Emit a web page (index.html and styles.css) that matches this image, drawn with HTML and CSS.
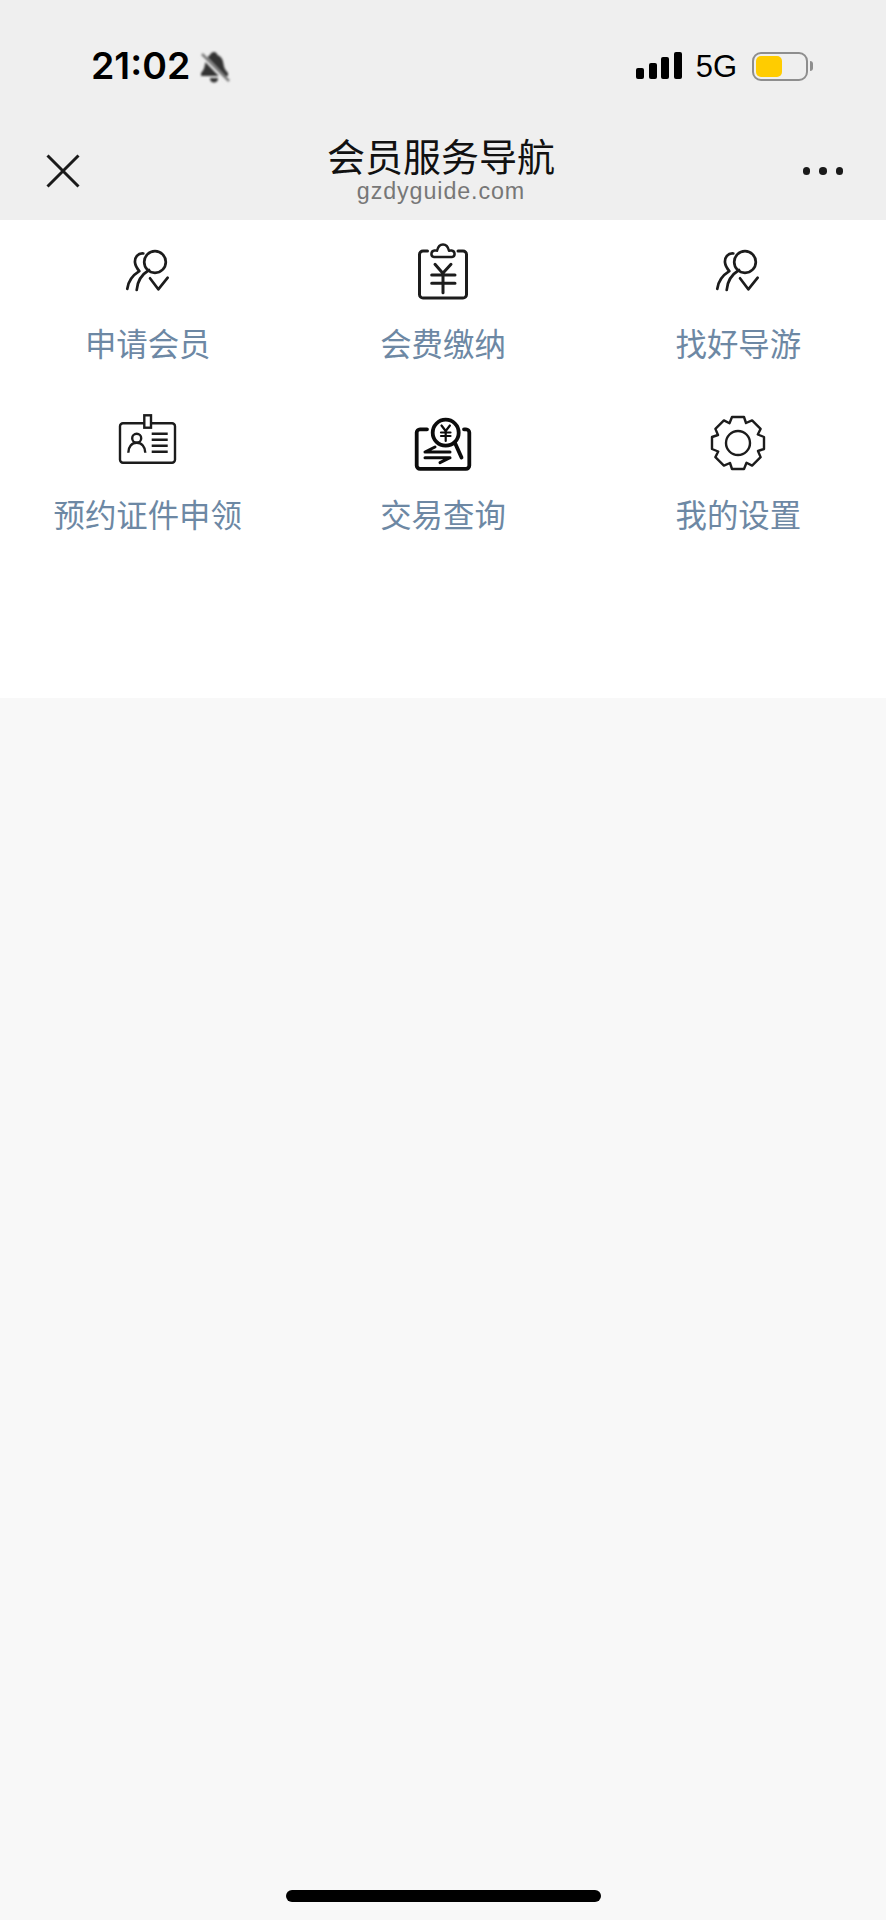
FILE: index.html
```html
<!DOCTYPE html>
<html lang="zh-CN">
<head>
<meta charset="utf-8">
<title>会员服务导航</title>
<link rel="stylesheet" href="styles.css">
</head>
<body>
<div class="page">
  <header class="top">
    <div class="status">
      <div class="status-left">
        <span class="time">21:02</span>
        <svg class="bell" width="32" height="34" viewBox="0 0 32 34"><path d="M15 2c2 0 3 1.500 3.500 3 4 1.500 5.500 5 6 9 .4 4 2 6 4.500 9v3H2v-3c2.500-3 3.500-5 4-9 .5-4 2-7.500 5-9C11.500 3.500 13 2 15 2z" fill="#333"/><path d="M11 28h8c0 3-1.500 4.500-4 4.500S11 31 11 28z" fill="#333"/><path d="M3 5l26 27" stroke="#efefef" stroke-width="5"/><path d="M3 4l27 27" stroke="#777" stroke-width="2.500"/></svg>
      </div>
      <div class="status-right">
        <div class="signal"><i class="b1"></i><i class="b2"></i><i class="b3"></i><i class="b4"></i></div>
        <span class="net">5G</span>
        <div class="battery"><div class="battery-fill"></div></div>
        <div class="battery-tip"></div>
      </div>
    </div>
    <nav class="nav">
      <div class="nav-left">
        <svg class="close" width="34" height="34" viewBox="0 0 34 34"><path d="M1.500 1.500l31 31M32.500 1.500l-31 31" stroke="#1a1a1a" stroke-width="3" fill="none"/></svg>
      </div>
      <div class="nav-title">
        <div class="title">会员服务导航</div>
        <div class="domain">gzdyguide.com</div>
      </div>
      <div class="nav-right"><i class="dot"></i><i class="dot"></i><i class="dot"></i></div>
    </nav>
  </header>

  <section class="menu">
    <a class="cell">
      <svg class="icon" viewBox="0 0 60 60"><g fill="none" stroke="#1c1c1c" stroke-width="2.700" stroke-linecap="round" stroke-linejoin="round"><circle cx="37" cy="22" r="10.800"/><path d="M18.700 50c.5-8 5-15.500 12.300-20"/><path d="M25.300 13.500c-5.500-.5-8.800 4-8.300 9 .3 3 1.800 5.500 4.300 8.700-6.500 4-11 10-12 17.600"/><path d="M32 38.300l8.300 11 9.400-11.600"/></g></svg>
      <span class="label">申请会员</span>
    </a>
    <a class="cell">
      <svg class="icon" viewBox="0 0 60 60"><g fill="none" stroke="#1c1c1c" stroke-width="3" stroke-linecap="round" stroke-linejoin="round"><path d="M14.500 11H10a3.500 3.500 0 0 0-3.500 3.500V54.500A3.500 3.500 0 0 0 10 58h40a3.500 3.500 0 0 0 3.500-3.500V14.500A3.500 3.500 0 0 0 50 11h-5"/><path d="M21 17c-3.500-.5-3.500-6 .5-6.500 1-.1 2 0 2.500.3C25 6.500 27 4.500 30 4.500s5 2 6 6.300c.6-.3 1.600-.4 2.500-.3 4 .5 4 6 .5 6.500z" stroke-width="2.500"/><path d="M22 24.300l7.800 9 8.200-9M18.700 35H42M18.700 43.300H42M30 33.300v19.400" /></g></svg>
      <span class="label">会费缴纳</span>
    </a>
    <a class="cell">
      <svg class="icon" viewBox="0 0 60 60"><g fill="none" stroke="#1c1c1c" stroke-width="2.700" stroke-linecap="round" stroke-linejoin="round"><circle cx="37" cy="22" r="10.800"/><path d="M18.700 50c.5-8 5-15.500 12.300-20"/><path d="M25.300 13.500c-5.500-.5-8.800 4-8.300 9 .3 3 1.800 5.500 4.300 8.700-6.500 4-11 10-12 17.600"/><path d="M32 38.300l8.300 11 9.400-11.600"/></g></svg>
      <span class="label">找好导游</span>
    </a>
    <a class="cell">
      <svg class="icon" viewBox="0 0 60 60"><g fill="none" stroke="#1c1c1c" stroke-width="2.400"><path d="M26.300 12.300H5a3 3 0 0 0-3 3V48.700a3 3 0 0 0 3 3H54a3 3 0 0 0 3-3V15.300a3 3 0 0 0-3-3H33"/><rect x="26.300" y="4.300" width="6.700" height="12.400"/><circle cx="18.700" cy="27.300" r="4.500"/><path d="M10.300 41.700c0-6 3.500-10 8.400-10s8.600 4 8.600 10"/><path d="M33.700 22.700h16M33.700 28.700h16M33.700 34.700h16M33.700 40.700h16"/></g></svg>
      <span class="label">预约证件申领</span>
    </a>
    <a class="cell">
      <svg class="icon" viewBox="0 0 60 60"><g fill="none" stroke="#0c0c0c" stroke-width="3.800" stroke-linecap="round" stroke-linejoin="round"><path d="M14 18.300H7a3.300 3.300 0 0 0-3.300 3.300v33a3.300 3.300 0 0 0 3.300 3.300h46a3.300 3.300 0 0 0 3.300-3.300v-33a3.300 3.300 0 0 0-3.300-3.300h-2"/><circle cx="32.700" cy="21.700" r="13"/><path d="M42 32l6.500 14.500"/><path d="M28.500 14.500l4.200 5.500 4.200-5.500M28 21.500h9.500M28 25h9.500M32.700 20v10" stroke-width="2.200"/><path d="M12 41h25M22 36l-10 5M12 46.700h25M37 46.700l-10 5" stroke-width="3"/></g></svg>
      <span class="label">交易查询</span>
    </a>
    <a class="cell">
      <svg class="icon" viewBox="0 0 60 60"><g transform="translate(30 32)" fill="none" stroke="#1c1c1c" stroke-width="2.400" stroke-linejoin="round"><path d="M-6-26H6L8-20 14.100-22.600 22.600-14.100 19.800-8.500 26-6V6L20 8 22.600 14.100 14.100 22.600 8.500 19.800 6 26H-6L-8 20-14.100 22.600-22.600 14.100-19.800 8.500-26 6V-6L-20-8-22.600-14.100-14.100-22.600-8.500-19.800z"/><circle r="12"/></g></svg>
      <span class="label">我的设置</span>
    </a>
  </section>

  <main class="rest">
    <div class="home-bar"></div>
  </main>
</div>
</body>
</html>
```

FILE: styles.css
```css
* { box-sizing: border-box; }
html, body { margin: 0; padding: 0; }
body {
  font-family: "Inter", "Liberation Sans", "Noto Sans CJK SC", sans-serif;
  background: #f8f8f8;
}
.page {
  width: 886px;
  height: 1920px;
  display: flex;
  flex-direction: column;
}
.top {
  height: 220px;
  background: #efefef;
  display: flex;
  flex-direction: column;
}
.status {
  height: 110px;
  padding: 44px 73px 0 91px;
  display: flex;
  justify-content: space-between;
  align-items: flex-start;
}
.status-left { display: flex; align-items: center; gap: 9px; }
.time {
  font-size: 37.500px;
  font-weight: 600;
  line-height: 44px;
  color: #000;
}
.bell { filter: blur(0.8px); margin-top: 2px; }
.status-right {
  display: flex;
  align-items: flex-start;
  padding-top: 8px;
}
.signal {
  display: flex;
  align-items: flex-end;
  gap: 4.500px;
  height: 27px;
  margin-right: 14px;
}
.signal i { display: block; width: 8px; background: #000; border-radius: 2px; }
.b1 { height: 11px; }
.b2 { height: 16px; }
.b3 { height: 22px; }
.b4 { height: 27px; }
.net {
  font-family: "Liberation Sans", sans-serif;
  font-size: 31px;
  line-height: 30px;
  color: #000;
  margin-right: 15px;
}
.battery {
  width: 56px;
  height: 29px;
  border: 2.500px solid #8e8e8e;
  border-radius: 9px;
  padding: 2px;
}
.battery-fill {
  width: 26px;
  height: 100%;
  background: #fc0;
  border-radius: 5px;
}
.battery-tip {
  width: 3px;
  height: 10px;
  margin: 9px 0 0 2px;
  background: #8e8e8e;
  border-radius: 0 3px 3px 0;
}
.nav {
  height: 110px;
  display: grid;
  grid-template-columns: 1fr auto 1fr;
}
.nav-left { padding: 44px 0 0 46px; }
.close { display: block; }
.nav-title { text-align: center; padding: 23px 4px 0 0; }
.title {
  font-family: "Noto Sans CJK SC", sans-serif;
  font-size: 38px;
  font-weight: 400;
  line-height: 44px;
  color: #111;
}
.domain {
  font-family: "Liberation Sans", sans-serif;
  font-size: 23.300px;
  letter-spacing: 0.900px;
  line-height: 28px;
  color: #777;
}
.nav-right {
  display: flex;
  justify-content: flex-end;
  gap: 8.800px;
  padding: 57px 43px 0 0;
}
.dot {
  display: block;
  width: 7.500px;
  height: 7.500px;
  border-radius: 50%;
  background: #1a1a1a;
}
.menu {
  height: 478px;
  background: #fff;
  display: grid;
  grid-template-columns: repeat(3, 1fr);
  grid-auto-rows: 170.500px;
  align-content: start;
}
.cell {
  display: flex;
  flex-direction: column;
  align-items: center;
  padding-top: 20px;
}
.icon { display: block; width: 60px; height: 60px; }
.label {
  margin-top: 23px;
  font-family: "Noto Sans CJK SC", sans-serif;
  font-size: 31.400px;
  line-height: 40px;
  color: #6d88a4;
}
.rest {
  flex: 1;
  background: #f8f8f8;
  display: flex;
  justify-content: center;
  align-items: flex-end;
  padding-bottom: 18px;
}
.home-bar {
  width: 315px;
  height: 12px;
  background: #000;
  border-radius: 6px;
}
```
